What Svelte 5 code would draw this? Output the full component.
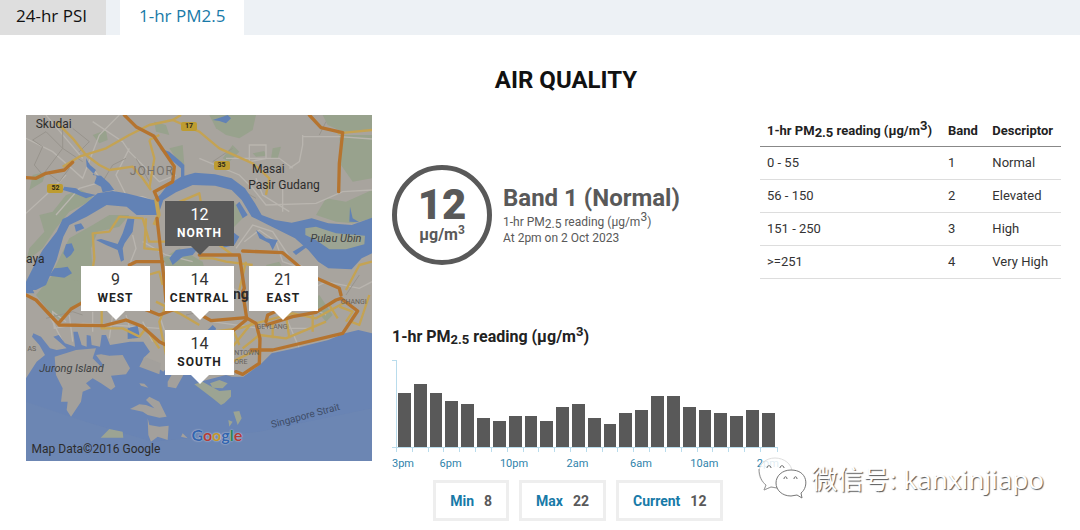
<script>
	let tab = $state('pm25');
	let selected = $state('NORTH');

	const regions = [
		{ name: 'NORTH', value: 12, x: 40.2, y: 24.9 },
		{ name: 'WEST', value: 9, x: 15.9, y: 43.5 },
		{ name: 'CENTRAL', value: 14, x: 40.2, y: 43.5 },
		{ name: 'EAST', value: 21, x: 64.4, y: 43.5 },
		{ name: 'SOUTH', value: 14, x: 40.2, y: 62.1 }
	];

	const bands = [
		{ range: '0 - 55', band: 1, descriptor: 'Normal' },
		{ range: '56 - 150', band: 2, descriptor: 'Elevated' },
		{ range: '151 - 250', band: 3, descriptor: 'High' },
		{ range: '>=251', band: 4, descriptor: 'Very High' }
	];

	// hourly readings, 3pm to 2pm the next day
	const readings = [
		19, 22, 19, 16, 15, 10, 9, 11, 11, 9, 14, 15,
		10, 8, 12, 13, 18, 18, 14, 13, 12, 11, 13, 12
	];
	const hours = { 0: '3pm', 3: '6pm', 7: '10pm', 11: '2am', 15: '6am', 19: '10am', 23: '2pm' };
	const axisMax = 30.5;

	const summary = [
		{ label: 'Min', value: Math.min(...readings) },
		{ label: 'Max', value: Math.max(...readings) },
		{ label: 'Current', value: readings[readings.length - 1] }
	];

	// place names on the map, in percent of its size
	const places = [
		{ text: 'Skudai', x: 2.8, y: 0.4, kind: 'town' },
		{ text: 'Masai', x: 65.3, y: 13.4, kind: 'town' },
		{ text: 'Pasir Gudang', x: 64.2, y: 18, kind: 'town' },
		{ text: 'aya', x: 0, y: 39.2, kind: 'town' },
		{ text: 'ng', x: 59.8, y: 49.4, kind: 'city' },
		{ text: 'JOHOR', x: 30, y: 13.8, kind: 'state' },
		{ text: 'Pulau Ubin', x: 82.2, y: 33.6, kind: 'island' },
		{ text: 'Jurong Island', x: 3.8, y: 71, kind: 'island' },
		{ text: 'GEYLANG', x: 66.6, y: 60.2, kind: 'area' },
		{ text: 'CHANGI', x: 91, y: 52.8, kind: 'area' },
		{ text: 'NTOWN', x: 60.2, y: 67.6, kind: 'area' },
		{ text: 'ORE', x: 60.2, y: 70.2, kind: 'area' },
		{ text: 'AS', x: 0.4, y: 66.4, kind: 'area' },
		{ text: 'Singapore Strait', x: 70.4, y: 84.6, kind: 'strait' },
		{ text: 'Map Data©2016 Google', x: 1.6, y: 94.2, kind: 'credit' }
	];

	const shields = [
		{ text: '17', x: 44.8, y: 2 },
		{ text: '35', x: 54.2, y: 13.4 },
		{ text: '52', x: 6.2, y: 20 }
	];
</script>

{#snippet unit()}µg/m<sup>3</sup>{/snippet}
{#snippet pm()}1-hr PM<sub>2.5</sub> reading (µg/m<sup>3</sup>){/snippet}

<main>
	<nav class="tabs">
		<button class:active={tab === 'psi'} onclick={() => (tab = 'psi')}>24-hr PSI</button>
		<button class:active={tab === 'pm25'} onclick={() => (tab = 'pm25')}>1-hr PM2.5</button>
	</nav>

	<h1>AIR QUALITY</h1>

	<div class="content">
		<div class="map">
			<svg viewBox="0 0 1038 1038" aria-hidden="true">
				<rect width="1038" height="1038" fill="#a8a49e" />

				<!-- parks and woods -->
				<g fill="#98a28d">
					<path d="M0 440L10 400 55 350 40 300 80 290 120 240 165 225 200 245 180 265 130 290 90 340 50 400z" />
					<path d="M130 370L200 330 250 300 310 300 280 335 215 350 195 400 200 470 160 520 110 525 80 470 95 440z" />
					<path d="M30 540L80 480 165 500V570L130 580 100 615 70 590z" />
					<path d="M410 430L460 400 530 440 540 480 480 490 430 470z" />
					<path d="M430 100L470 90 475 150 450 130zM385 20L420 30 430 60 390 50z" />
					<path d="M550 0H690L680 45 640 70 600 60 570 40z" />
					<path d="M590 130L620 90 640 110 610 140z" />
					<path d="M940 60L1038 60V190L980 200 945 150zM890 0L1038 0V45L950 50 905 30z" />
					<path d="M740 100L765 95 755 130 735 130zM680 115L715 108 720 122 690 125z" />
					<path d="M870 300L900 250 960 260 1038 225V310L980 325 930 320z" />
					<path d="M20 180L60 170 50 200 10 225zM200 60L240 45 245 75 220 85z" />
					<path d="M600 290L625 260 650 310 610 350 590 330zM850 560L880 540 920 600 900 620zM720 450L760 440 780 480 740 490z" />
				</g>

				<!-- minor streets -->
				<g fill="none" stroke="#b9b5af" stroke-width="4">
					<path d="M0 70L80 110 170 190 220 60 280 0M60 0L170 130M200 20L290 80 310 110 400 200 450 180M310 100L270 180 300 240 380 260" />
					<path d="M0 295L60 240 120 180M90 300L160 220 230 200M520 130L640 180 680 220 720 270 870 265 950 230 1038 225" />
					<path d="M600 130H760L800 160M830 60V90L820 140 790 160M830 65H940L1038 72M670 90H720V130L670 140z" />
					<path d="M690 190L710 240 790 290M770 205V290M120 620L80 590 85 640 170 625 260 630 400 640" />
					<path d="M320 360L330 400 310 450 330 510M350 380L420 420 500 440M630 400L680 330 740 350 800 440 860 470" />
					<path d="M600 510L720 570 800 550 900 600M700 500L760 560 820 700M560 620L700 640 860 640M840 530L900 500 1000 520 1038 500" />
					<path d="M70 600L110 680M130 600L140 680M200 590V650M260 600L250 670M300 600L320 670M350 620L380 680M400 600L430 690" />
					<path d="M200 160L230 200 290 250 350 245 385 260M655 380L700 345 750 380 770 440 830 460" />
				</g>
				<g fill="none" stroke="#98948d" stroke-width="3">
					<path d="M20 75L50 95 25 150 50 180 110 100 60 50zM110 100L170 140M140 40L190 80 160 110M110 40V100M60 170L100 200 130 160" />
					<path d="M620 210L690 250M900 20L880 60M560 140L620 100M1000 480L960 540M480 600L570 580M230 200L260 150 300 130M330 130L370 200M60 610L140 590 170 600" />
				</g>

				<!-- strait and sea -->
				<g fill="#6282b5">
					<path d="M0 500L30 440 50 405 92 350 110 312 125 305 180 265 215 235 260 228 300 235 382 255 402 240 425 210 465 185 507 173 567 178 617 190 657 220 687 265 707 300 747 315 797 323 857 310 907 325 977 330 1038 308V415L1007 430 977 463 907 460 877 440 847 405 807 370 727 330 677 305 647 255 617 225 567 212 500 210 450 232 412 255 400 290 392 300 332 300 302 275 242 270 182 305 130 330 112 365 92 435 60 510 30 525H0z" />
					<path d="M180 130L192 150 210 165 200 180 225 182 250 205 265 225 230 232 225 215 205 205 212 185 182 155z" />
					<path d="M400 100L430 110 465 140 475 150 475 190 465 190 465 160 430 130zM560 15L590 5 605 0 615 10 600 25 580 18z" />
					<path d="M115 215L150 220 165 230 210 240 180 250 145 235 110 225zM145 330L165 325 175 340 150 350z" />
					<path d="M305 310L325 312 320 350 296 385 290 400 294 435 285 440 275 405 240 390 210 375 225 372 275 387 290 355z" />
					<path d="M120 388L137 385 145 405 135 420 122 430 112 415zM85 460L105 458 125 455 138 475 115 488 70 482z" />
					<path d="M430 430L450 405 520 395 500 420 470 425 440 450zM587 400L595 360 620 350 640 365 625 390z" />
					<path d="M640 260L665 300 650 310 630 270zM690 345L720 370 755 375 740 405 730 385 700 370zM800 410L850 380 855 387 810 420zM972 275L980 310 1000 322 970 320z" />
					<path d="M0 510L15 512 25 535 0 535zM305 640L335 632 342 668 305 672zM540 650L560 630 570 640 565 660z" />
				</g>
				<path fill="#6984b4" d="M0 790L32 740 57 720 40 690 18 665 22 655 45 665 72 700 92 705 122 700 82 665 98 660 117 685 147 695 142 650 155 650 167 690 182 695 182 660 194 662 197 690 222 695 227 660 240 660 252 690 312 680 352 680 372 710 352 730 412 770 432 748 452 760 480 760 522 800 600 780 617 785 652 785 707 745 737 715 807 700 907 675 957 655 997 645 1038 655V1038H0z" />
				<path fill="#7088b1" d="M0 860L180 920 380 980 700 950 1038 880V1038H0z" opacity=".5" />

				<!-- islands -->
				<g fill="#a3a09c">
					<path d="M86 725L150 705 210 700 200 730 225 755 232 750 210 720 225 718 250 722 290 720 312 760 300 778 255 782 268 815 255 825 225 805 200 790 180 805 195 820 170 830 165 860 135 905 122 885 125 860 105 860 110 820 90 780z" />
					<path d="M355 725L405 745 400 778 340 755zM425 800L445 765 475 775 450 820 425 815z" />
					<path d="M340 805L355 806 367 818 345 812zM312 882L340 868 360 870 385 880 360 855 370 845 400 860 422 905 400 908 365 900 350 890zM470 955L485 970 465 965z" />
					<path d="M365 910L370 930 400 935 428 932 425 975 395 965 375 980 367 960z" />
				</g>
				<g fill="#9ca493">
					<path d="M838 340L870 335 930 355 1017 362 1015 388 960 403 910 403 870 375 838 360z" />
					<path d="M224 968L250 942 290 950 292 968zM505 808L530 800 580 828 615 825 615 845 595 865 585 870 560 850z" />
					<path d="M552 805L580 795 605 805 590 820 560 818zM607 915L620 920 610 935zM622 890L640 888 647 910 635 930z" />
				</g>

				<!-- main roads -->
				<g fill="none" stroke="#c4a353" stroke-width="7" stroke-linejoin="round">
					<path d="M90 20L140 70 180 120 220 150 250 165 320 155 350 190 375 225" />
					<path d="M110 155L160 125 240 100 310 60 370 30 440 15 465 0M440 15L520 50 580 100 680 145 730 190 720 240" />
					<path d="M370 75L385 130 370 220M370 75L400 60M935 55L1038 45" />
					<path d="M390 250L398 300 385 330" stroke-width="12" />
					<path d="M190 525L205 430 200 355 250 350 280 305 350 310 370 380 440 380M360 310L355 400 405 405M365 480L400 470 410 510" />
					<path d="M450 265L520 235 525 265M520 430L560 430 600 440 680 450M640 525L660 440M227 520V640L290 640 340 665 360 640 400 700" />
					<path d="M440 520L400 620 420 720M390 560L460 595 520 630M560 650L640 640 690 625 800 595 870 610 960 560" />
					<path d="M650 700L700 660 780 670 900 620M690 620L700 680M740 620V670M780 600L790 670M860 600L860 650M910 570L935 610" />
					<path d="M600 720L680 620M620 640L640 690M960 525L1000 450 1038 440M940 575L980 590 960 620M1030 540L1000 630 975 620" />
					<path d="M560 700L620 740 700 700M470 300L530 330M580 390L620 420" />
				</g>
				<g fill="none" stroke="#b5742f" stroke-width="10" stroke-linejoin="round" stroke-linecap="round">
					<path d="M295 0L330 35 383 63 445 155 440 200 385 230 396 255M393 310L408 440 415 500 420 560" />
					<path d="M0 188L30 190 60 175 115 165 140 142M850 0L885 38 950 53 940 145 938 230" />
					<path d="M310 450L330 440H410M0 540L30 555 100 630 235 632 300 615 350 635 400 680 440 700" />
					<path d="M100 622L135 582 165 565 230 520M350 580L400 600 440 585M520 420L640 420 655 520 650 530 662 610" />
					<path d="M650 408L770 413 850 480 940 520 945 540M525 600L555 617 660 608 690 625 702 670 700 745 650 778 630 770" />
					<path d="M675 705L740 705 950 655 995 588 945 550 930 555 870 592 800 605 720 630M720 620L725 600 840 550M660 615L620 648" />
				</g>
			</svg>

			{#each places as place}
				<span class="place {place.kind}" style="left: {place.x}%; top: {place.y}%">{place.text}</span>
			{/each}

			{#each shields as shield}
				<span class="shield" style="left: {shield.x}%; top: {shield.y}%">{shield.text}</span>
			{/each}

			<div class="google"><i>G</i><i>o</i><i>o</i><i>g</i><i>l</i><i>e</i></div>

			{#each regions as region}
				<button
					class="pin"
					class:selected={selected === region.name}
					style="left: {region.x}%; top: {region.y}%"
					onclick={() => (selected = region.name)}
				>
					<span>{region.value}</span>
					<b>{region.name}</b>
				</button>
			{/each}
		</div>

		<div class="details">
			<div class="overview">
				<div class="reading">
					<div class="circle">
						<strong>12</strong>
						<span>{@render unit()}</span>
					</div>
					<div class="summary">
						<h2>Band 1 (Normal)</h2>
						<p>{@render pm()}</p>
						<p>At 2pm on 2 Oct 2023</p>
					</div>
				</div>

				<table>
					<thead>
						<tr>
							<th scope="col">{@render pm()}</th>
							<th scope="col">Band</th>
							<th scope="col">Descriptor</th>
						</tr>
					</thead>
					<tbody>
						{#each bands as row}
							<tr>
								<td>{row.range}</td>
								<td>{row.band}</td>
								<td>{row.descriptor}</td>
							</tr>
						{/each}
					</tbody>
				</table>
			</div>

			<section class="trend">
				<h3>{@render pm()}</h3>
				<div class="chart">
					{#each readings as reading}
						<div class="slot">
							<div class="bar" style="height: {(reading / axisMax) * 100}%"></div>
						</div>
					{/each}
				</div>
				<div class="hours">
					{#each readings as _, i}
						<span>{hours[i] ?? ''}</span>
					{/each}
				</div>
				<dl>
					{#each summary as item}
						<div>
							<dt>{item.label}</dt>
							<dd>{item.value}</dd>
						</div>
					{/each}
				</dl>
			</section>
		</div>
	</div>

	<div class="account">
		<svg viewBox="0 0 50 44" width="50" height="44" aria-hidden="true">
			<path class="bubble" d="M17 1C8 1 1 7 1 15c0 6 3 10 7 13l-2 5 7-3c12 3 21-3 21-15C34 7 26 1 17 1z" />
			<path class="shade" d="M1 12c0 7 3 13 7 16l-2 5 7-3 6 1" />
			<path class="bubble front" d="M33 13c-9 0-15 6-15 13s6 13 15 13l6-1 5 3-1-5c8-6 7-23-10-23z" />
			<path class="eyes" d="M9 11c0-3 4-3 4 0M22 11c0-3 4-3 4 0M26 22c0-3 3-3 3 0M36 22c0-3 3-3 3 0" />
		</svg>
		<span>微信号: kanxinjiapo</span>
	</div>
</main>

<style>
	:global(body) {
		margin: 0;
		background: #fff;
	}

	main {
		position: relative;
		font-family: Roboto, 'Liberation Sans', sans-serif;
		color: #222;
	}

	button {
		border: 0;
		cursor: pointer;
	}

	.tabs {
		display: flex;
		gap: 14px;
		background: #edf1f5;
	}

	.tabs button {
		height: 35px;
		padding: 0 19px 5px;
		background: #dedede;
		color: #111;
		font-family: 'Open Sans', 'Noto Sans', sans-serif;
		font-size: 17px;
	}

	.tabs button:first-child {
		padding-left: 16px;
	}

	.tabs .active {
		background: #fff;
		color: #187aa8;
	}

	h1 {
		margin: 30px 0 20px;
		padding-left: 52px;
		font-size: 24px;
		font-weight: 700;
		line-height: 30px;
		text-align: center;
		color: #111;
	}

	.content {
		display: grid;
		grid-template-columns: 346fr 669fr;
		gap: 20px;
		align-items: start;
		padding: 0 19px 0 26px;
	}

	/* map */
	.map {
		position: relative;
		aspect-ratio: 1;
		overflow: hidden;
	}

	.map > svg {
		display: block;
		width: 100%;
	}

	.place {
		position: absolute;
		font-size: 12px;
		line-height: 16px;
		white-space: nowrap;
		color: #2c2c2c;
	}

	.state {
		letter-spacing: 1px;
		color: #77736d;
	}

	.city {
		font-size: 14px;
		font-weight: 700;
	}

	.island {
		font-size: 11px;
		font-style: italic;
		color: #3c3f42;
	}

	.area {
		font-size: 7px;
		line-height: 8px;
		color: #67625a;
	}

	.strait {
		font-size: 10px;
		color: #3e4c66;
		transform: rotate(-15deg);
	}

	.shield {
		position: absolute;
		padding: 0 4px;
		border-radius: 2px;
		background: #bd9c31;
		font-size: 7px;
		font-weight: 700;
		line-height: 9px;
		color: #2b2818;
	}

	.google {
		position: absolute;
		left: 47.8%;
		top: 89.2%;
		font-family: Lato, sans-serif;
		font-size: 16px;
		line-height: 22px;
		font-weight: 700;
		text-shadow: 0 0 1px #c3ccdc, 0 0 2px #b4bfd3;
	}

	.google i {
		font-style: normal;
		color: #3365ae;
	}

	.google i:nth-child(2),
	.google i:nth-child(6) {
		color: #b03c38;
	}

	.google i:nth-child(3) {
		color: #bf942c;
	}

	.google i:nth-child(5) {
		color: #2d8550;
	}

	.pin {
		position: absolute;
		display: flex;
		flex-direction: column;
		align-items: center;
		width: 69px;
		height: 45px;
		padding: 4px 0 0;
		background: #fff;
		color: #333;
		font-family: inherit;
		font-size: 16px;
		line-height: 19px;
	}

	.pin b {
		font-size: 12px;
		line-height: 18px;
		letter-spacing: 1px;
		color: #222;
	}

	.pin::after {
		content: '';
		position: absolute;
		top: 100%;
		left: 50%;
		margin-left: -9px;
		border: 9px solid transparent;
		border-top-color: #fff;
		border-bottom: 0;
	}

	.pin.selected,
	.pin.selected b {
		background: #595959;
		color: #fff;
	}

	.pin.selected::after {
		border-top-color: #595959;
	}

	/* current reading and bands */
	.overview {
		display: grid;
		grid-template-columns: 368fr 301fr;
		align-items: start;
	}

	.reading {
		display: flex;
		align-items: center;
		gap: 11px;
		margin-top: 50px;
		color: #595959;
	}

	.circle {
		box-sizing: border-box;
		display: flex;
		flex-direction: column;
		align-items: center;
		width: 100px;
		height: 100px;
		padding-top: 14px;
		border: 5px solid #595959;
		border-radius: 50%;
		font-size: 16px;
		font-weight: 700;
		line-height: 18px;
	}

	.circle strong {
		font-size: 42px;
		line-height: 42px;
	}

	sub,
	sup {
		font-size: inherit;
		line-height: 0;
	}

	sub {
		vertical-align: -2px;
	}

	.circle sup {
		font-size: 12px;
	}

	.summary {
		padding-bottom: 2px;
	}

	h2 {
		margin: 0;
		font-size: 24px;
		line-height: 32px;
	}

	.reading p {
		margin: 0;
		font-size: 12px;
		line-height: 16px;
	}

	table {
		width: 100%;
		border-collapse: collapse;
		font-size: 13px;
		line-height: 16px;
	}

	th,
	td {
		padding: 8px 7px;
		border-bottom: 1px solid #ddd;
		text-align: left;
		white-space: nowrap;
	}

	th {
		padding-bottom: 7px;
		border-color: #888;
	}

	td {
		color: #333;
	}

	/* last 24 hours */
	.trend {
		width: 57.5%;
		margin-top: 48px;
	}

	h3 {
		margin: 0 0 13px;
		font-size: 16px;
		line-height: 20px;
	}

	h3 :global(sub),
	h3 :global(sup) {
		font-size: 13px;
	}

	.chart,
	.hours {
		display: grid;
		grid-template-columns: repeat(24, 1fr);
		margin-left: 4px;
	}

	.chart {
		position: relative;
		height: 87px;
		border: 1px solid #b9dcec;
		border-width: 0 0 1px 1px;
	}

	.chart::before,
	.chart::after {
		content: '';
		position: absolute;
		left: -5px;
		width: 5px;
		height: 1px;
		background: #b9dcec;
	}

	.chart::before {
		top: 0;
	}

	.chart::after {
		bottom: -1px;
	}

	.slot {
		position: relative;
		display: flex;
		align-items: flex-end;
		padding: 0 1px;
	}

	.slot::before,
	.slot:last-child::after {
		content: '';
		position: absolute;
		top: 100%;
		left: -1px;
		width: 1px;
		height: 5px;
		background: #b9dcec;
	}

	.slot:last-child::after {
		left: 100%;
	}

	.bar {
		width: 100%;
		margin-right: 1px;
		background: #595959;
	}

	.hours {
		height: 32px;
		padding-top: 8px;
		box-sizing: border-box;
		font-size: 11px;
		line-height: 16px;
		color: #2f83ab;
	}

	.hours span {
		display: flex;
		justify-content: center;
		width: 14px;
		white-space: nowrap;
	}

	dl {
		display: flex;
		justify-content: center;
		gap: 10px;
		margin: 0 12px 0 0;
		font-size: 14px;
		font-weight: 700;
		line-height: 16px;
	}

	dl div {
		display: flex;
		gap: 10px;
		padding: 10px 14px 9px;
		border: 3px solid #eee;
	}

	dt {
		color: #187aa8;
	}

	dd {
		margin: 0;
		color: #595959;
	}

	/* account mark laid over the lower right corner */
	.account {
		position: absolute;
		right: 36px;
		bottom: 20px;
		display: flex;
		align-items: center;
		gap: 3px;
		font-family: 'Noto Sans', 'Noto Sans CJK SC', sans-serif;
		font-size: 26px;
		line-height: 40px;
		color: #fff;
		text-shadow: 1px 1px 1px #555;
	}

	.account svg {
		fill: none;
		stroke-width: 1;
	}

	.shade {
		stroke: #999;
	}

	.bubble {
		fill: #fff;
		fill-opacity: 0.85;
		stroke: #ddd;
	}

	.front {
		fill-opacity: 1;
		stroke: #777;
	}

	.eyes {
		stroke: #666;
	}
</style>
